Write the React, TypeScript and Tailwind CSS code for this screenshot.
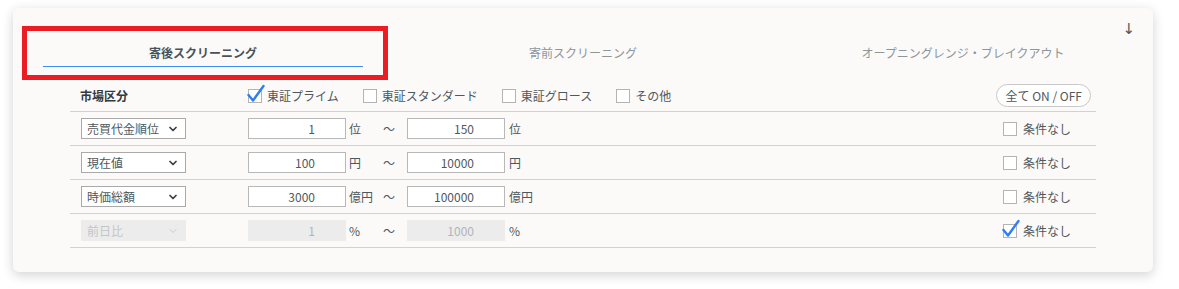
import { ChevronDown } from "lucide-react";

const font = { fontFamily: '"Noto Sans CJK JP", "Noto Sans", sans-serif' };

function Box({ checked, disabled }: { checked?: boolean; disabled?: boolean }) {
  return (
    <span className="relative inline-block w-[14px] h-[14px] shrink-0">
      <span
        className={`block w-[14px] h-[14px] border ${
          disabled ? "border-[#d0d0d0]" : "border-[#b4b4b4]"
        } bg-white`}
      />
      {checked && (
        <svg
          className="absolute -left-[1px] -top-[5px]"
          width="18"
          height="20"
          viewBox="0 0 18 20"
        >
          <path
            d="M1.5 11 L6 16.5 L16.5 2"
            fill="none"
            stroke="#2f7ff0"
            strokeWidth="2.4"
            strokeLinecap="round"
            strokeLinejoin="round"
          />
        </svg>
      )}
    </span>
  );
}

function Check({ label, checked }: { label: string; checked?: boolean }) {
  return (
    <label className="flex items-center gap-[5px]">
      <Box checked={checked} />
      <span>{label}</span>
    </label>
  );
}

interface Row {
  field: string;
  from: string;
  to: string;
  unit: string;
  disabled?: boolean;
}

const rows: Row[] = [
  { field: "売買代金順位", from: "1", to: "150", unit: "位" },
  { field: "現在値", from: "100", to: "10000", unit: "円" },
  { field: "時価総額", from: "3000", to: "100000", unit: "億円" },
  { field: "前日比", from: "1", to: "1000", unit: "%", disabled: true },
];

function NumInput({ value, disabled }: { value: string; disabled?: boolean }) {
  return (
    <input
      readOnly
      value={value}
      disabled={disabled}
      className={`w-[98px] h-[21px] border text-right pr-[30px] text-[12px] outline-none ${
        disabled
          ? "bg-[#ececec] border-[#ececec] text-[#b0b5b8]"
          : "bg-white border-[#b8b8b8] text-[#4f585d]"
      }`}
      style={font}
    />
  );
}

const tabs = ["寄後スクリーニング", "寄前スクリーニング", "オープニングレンジ・ブレイクアウト"];

export default function App() {
  return (
    <div className="w-[1179px] h-[289px] bg-white pt-[8px] pl-[13px]" style={font}>
      <div className="relative w-[1140px] h-[264px] bg-[#fbfaf9] rounded-[6px] shadow-[0_3px_12px_rgba(0,0,0,0.18)] text-[12px] text-[#4f585d]">
        {/* tabs */}
        <div className="grid grid-cols-3 pt-[35px]">
          {tabs.map((t, i) => (
            <div key={t} className="px-[30px]">
              <div
                className={`text-center leading-[19px] pb-[4px] ${
                  i === 0
                    ? "font-bold text-[#4a5257] border-b border-[#3d8ef3]"
                    : "text-[#8d969b] border-b border-transparent"
                }`}
              >
                {t}
              </div>
            </div>
          ))}
        </div>

        {/* table */}
        <div className="mx-[57px] mt-[13px]">
          <div className="flex items-center h-[32px] border-b border-[#c9d5dc]">
            <div className="w-[178px] pl-[10px] font-bold text-[#333a3e]">市場区分</div>
            <div className="flex items-center gap-[24px]">
              <Check label="東証プライム" checked />
              <Check label="東証スタンダード" />
              <Check label="東証グロース" />
              <Check label="その他" />
            </div>
            <button className="ml-auto mr-[5px] h-[23px] px-[8px] rounded-full border border-[#c8c8c8] bg-white text-[12px] text-[#4f585d] leading-none">
              全て ON / OFF
            </button>
          </div>

          {rows.map((r) => (
            <div key={r.field} className="flex items-center h-[34px] border-b border-[#c9d5dc]">
              <div className="w-[178px] pl-[11px]">
                <div
                  className={`w-[105px] h-[21px] flex items-center justify-between pl-[5px] pr-[6px] border ${
                    r.disabled
                      ? "bg-[#ececec] border-[#ececec] text-[#c2c6c8]"
                      : "bg-white border-[#a9a9a9] text-[#4f585d]"
                  }`}
                >
                  <span>{r.field}</span>
                  <ChevronDown
                    size={12}
                    strokeWidth={r.disabled ? 2 : 3.5}
                    color={r.disabled ? "#c8cbcd" : "#3a3f42"}
                  />
                </div>
              </div>
              <NumInput value={r.from} disabled={r.disabled} />
              <span className="w-[37px] pl-[3px]">{r.unit}</span>
              <span className="w-[24px]">～</span>
              <NumInput value={r.to} disabled={r.disabled} />
              <span className="pl-[4px]">{r.unit}</span>
              <label className="ml-auto mr-[25px] flex items-center gap-[6px]">
                <Box checked={r.disabled} />
                <span>条件なし</span>
              </label>
            </div>
          ))}
        </div>

        {/* sort arrow */}
        <span
          className="absolute top-[12px] right-[18px] text-[15px] leading-[18px] text-[#555]"
          style={{ fontFamily: '"DejaVu Sans", sans-serif' }}
        >
          ↓
        </span>

        {/* annotation */}
        <div className="absolute left-[9px] top-[18px] w-[366px] h-[54px] border-[5px] border-[#ec1c24] pointer-events-none" />
      </div>
    </div>
  );
}
